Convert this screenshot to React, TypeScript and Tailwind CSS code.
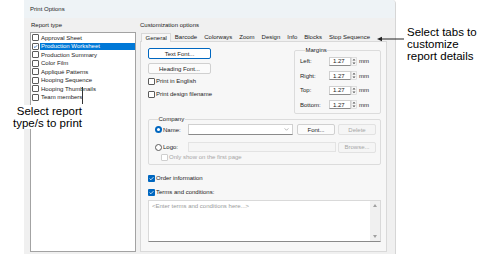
const reports = [
  "Approval Sheet",
  "Production Worksheet",
  "Production Summary",
  "Color Film",
  "Appliqué Patterns",
  "Hooping Sequence",
  "Hooping Thumbnails",
  "Team members",
];

const tabs = ["General", "Barcode", "Colorways", "Zoom", "Design", "Info", "Blocks", "Stop Sequence"];

const margins = ["Left:", "Right:", "Top:", "Bottom:"];

function Check({ checked = false, filled = false, disabled = false }: { checked?: boolean; filled?: boolean; disabled?: boolean }) {
  if (filled) {
    return (
      <span className="flex h-[7px] w-[7px] shrink-0 items-center justify-center rounded-[1px] bg-[#0067c0]">
        <svg viewBox="0 0 7 7" className="h-[7px] w-[7px]">
          <path d="M1.6 3.6 2.9 4.8 5.4 2.2" fill="none" stroke="white" strokeWidth="0.8" />
        </svg>
      </span>
    );
  }
  return (
    <span
      className={`flex h-[7px] w-[7px] shrink-0 items-center justify-center rounded-[1px] border bg-white ${
        disabled ? "border-[#cfcfcf]" : "border-[#5c5c5c]"
      }`}
    >
      {checked && (
        <svg viewBox="0 0 5 5" className="h-[5px] w-[5px]">
          <path d="M0.9 2.6 2 3.6 4.1 1.3" fill="none" stroke="#1f5fb0" strokeWidth="0.8" />
        </svg>
      )}
    </span>
  );
}

function Radio({ on = false }: { on?: boolean }) {
  if (on) {
    return (
      <span className="flex h-[7px] w-[7px] shrink-0 items-center justify-center rounded-full bg-[#0067c0]">
        <span className="h-[3px] w-[3px] rounded-full bg-white" />
      </span>
    );
  }
  return <span className="h-[7px] w-[7px] shrink-0 rounded-full border border-[#5c5c5c] bg-white" />;
}

function Spin() {
  return (
    <div className="flex h-[9px] items-center">
      <div className="flex h-[9px] w-[22px] items-center border border-[#d0d0d0] border-b-[#8a8a8a] bg-white pl-[3px]">
        1.27
      </div>
      <svg viewBox="0 0 6 9" className="h-[9px] w-[6px]">
        <rect x="0.5" y="0.5" width="5" height="8" fill="#f6f6f6" stroke="#d0d0d0" strokeWidth="0.6" />
        <path d="M1.5 3.5 3 1.8 4.5 3.5Z M1.5 5.5 3 7.2 4.5 5.5Z" fill="#555" />
      </svg>
      <span className="ml-[2px]">mm</span>
    </div>
  );
}

export default function App() {
  return (
    <div className="relative h-[270px] w-[485px] overflow-hidden bg-white font-['Liberation_Sans',Arial,sans-serif] text-[6px] leading-[8px] text-[#1b1b1b]">
      <div className="ml-[24px] flex h-[254px] w-[372px] flex-col overflow-hidden rounded-tr-[4px] border-r border-[#d6d6d6] bg-[#f0f0f0]">
        <div className="flex h-[18px] shrink-0 items-center bg-[#eef3f6] pl-[6px]">Print Options</div>

        <div className="flex min-h-0 flex-1 gap-[4px] pb-[2px] pl-[6px] pr-[8px] pt-[3px]">
          {/* report type */}
          <div className="flex w-[108px] flex-col">
            <div className="h-[11px] pl-[1px]">Report type</div>
            <div className="flex-1 border border-[#a3a3a3] bg-white pt-[0.5px]">
              {reports.map((r, i) => (
                <div key={r} className="flex h-[8.5px] items-center gap-[1px] pl-[1px]">
                  <Check checked={i === 1} />
                  <span className={`flex h-[7.5px] flex-1 items-center pl-[1px] ${i === 1 ? "bg-[#0078d7] text-white" : ""}`}>
                    {r}
                  </span>
                </div>
              ))}
            </div>
          </div>

          {/* customization */}
          <div className="flex flex-1 flex-col">
            <div className="h-[11px]">Customization options</div>
            <div className="flex h-[9px] items-end pl-[1px]">
              {tabs.map((t, i) => (
                <div
                  key={t}
                  className={`flex h-[9px] items-center px-[3.5px] ${
                    i === 0 ? "relative top-px border border-b-0 border-[#d9d9d9] bg-[#f7f7f7]" : ""
                  }`}
                >
                  {t}
                </div>
              ))}
            </div>
            <div className="flex flex-1 flex-col border border-[#d9d9d9] bg-[#f7f7f7] pb-[7px] pl-[7px] pr-[5px] pt-[6px]">
              <div className="flex justify-between">
                <div className="flex flex-col">
                  <div className="flex h-[11px] w-[63px] items-center justify-center rounded-[2px] border border-[#0067c0] bg-white">
                    Text Font...
                  </div>
                  <div className="mt-[4px] flex h-[11px] w-[63px] items-center justify-center rounded-[2px] border border-[#d0d0d0] bg-[#fbfbfb]">
                    Heading Font...
                  </div>
                  <div className="mt-[3px] flex h-[8px] items-center gap-[1px]">
                    <Check />
                    <span>Print in English</span>
                  </div>
                  <div className="mt-[5px] flex h-[8px] items-center gap-[1px]">
                    <Check />
                    <span>Print design filename</span>
                  </div>
                </div>

                <fieldset className="-mt-[1px] w-[87px] rounded-[2px] border border-[#dcdcdc] pb-[1px] pl-[5px]">
                  <legend className="ml-[5px] px-[0.5px] leading-[7px]">Margins</legend>
                  {margins.map((m) => (
                    <div key={m} className="flex h-[14.5px] items-center">
                      <span className="w-[29px]">{m}</span>
                      <Spin />
                    </div>
                  ))}
                </fieldset>
              </div>

              <fieldset className="mt-[2px] rounded-[2px] border border-[#dcdcdc] pb-[3px] pl-[6px] pr-[4px]">
                <legend className="ml-[3px] px-[0.5px] leading-[7px]">Company</legend>
                <div className="mt-[1px] flex h-[11px] items-center">
                  <Radio on />
                  <span className="ml-[1px] w-[25px]">Name:</span>
                  <div className="flex h-[11px] w-[105px] items-center justify-end border border-[#d0d0d0] border-b-[#8a8a8a] bg-white pr-[3px]">
                    <svg viewBox="0 0 6 4" className="h-[3px] w-[5px]">
                      <path d="M0.5 0.5 3 3 5.5 0.5" fill="none" stroke="#8a8a8a" strokeWidth="0.8" />
                    </svg>
                  </div>
                  <div className="ml-[4px] flex h-[11px] w-[38px] items-center justify-center rounded-[2px] border border-[#d0d0d0] bg-[#fbfbfb]">
                    Font...
                  </div>
                  <div className="ml-[3px] flex h-[11px] w-[38px] items-center justify-center rounded-[2px] border border-[#e2e2e2] bg-[#f5f5f5] text-[#a6a6a6]">
                    Delete
                  </div>
                </div>
                <div className="mt-[7px] flex h-[10px] items-center">
                  <Radio />
                  <span className="ml-[1px] w-[25px]">Logo:</span>
                  <div className="h-[10px] w-[148px] border border-[#e3e3e3] bg-[#f5f5f5]" />
                  <div className="ml-[2px] flex h-[11px] w-[38px] items-center justify-center rounded-[2px] border border-[#e2e2e2] bg-[#f5f5f5] text-[#a6a6a6]">
                    Browse...
                  </div>
                </div>
                <div className="ml-[6px] mt-[1px] flex h-[8px] items-center gap-[1px] text-[#a6a6a6]">
                  <Check disabled />
                  <span>Only show on the first page</span>
                </div>
              </fieldset>

              <div className="mt-[9px] flex h-[8px] items-center gap-[1px]">
                <Check filled />
                <span>Order information</span>
              </div>
              <div className="mt-[6px] flex h-[8px] items-center gap-[1px]">
                <Check filled />
                <span>Terms and conditions:</span>
              </div>

              <div className="mt-[4px] flex h-[42px] border border-[#d9d9d9] border-b-[#8a8a8a] bg-white">
                <div className="flex-1 pl-[3px] pt-[1px] text-[#9a9a9a]">&lt;Enter terms and conditions here...&gt;</div>
                <div className="flex w-[10px] flex-col items-center justify-between bg-[#f0f0f0] py-[3px]">
                  <svg viewBox="0 0 4 3" className="h-[3px] w-[4px]">
                    <path d="M0 3 2 0 4 3Z" fill="#a0a0a0" />
                  </svg>
                  <svg viewBox="0 0 4 3" className="h-[3px] w-[4px]">
                    <path d="M0 0 2 3 4 0Z" fill="#a0a0a0" />
                  </svg>
                </div>
              </div>
            </div>
          </div>
        </div>
      </div>

      {/* callouts */}
      <div className="absolute left-[82px] top-[87px] h-[17px] w-px bg-[#333]" />
      <div className="absolute left-[4px] top-[105px] w-[78px] bg-white text-right font-['Liberation_Sans',Arial,sans-serif] text-[11.5px] leading-[12px] text-black">
        Select report
        <br />
        type/s to print
      </div>

      <svg className="absolute left-[376px] top-[36px] h-[6px] w-[28px]" viewBox="0 0 28 6">
        <path d="M1 3 6 0.8 6 5.2Z" fill="#222" />
        <path d="M5 3H28" stroke="#222" strokeWidth="1" />
      </svg>
      <div className="absolute left-[407px] top-[26px] text-[11.5px] leading-[12px] text-black">
        Select tabs to
        <br />
        customize
        <br />
        report details
      </div>
    </div>
  );
}
